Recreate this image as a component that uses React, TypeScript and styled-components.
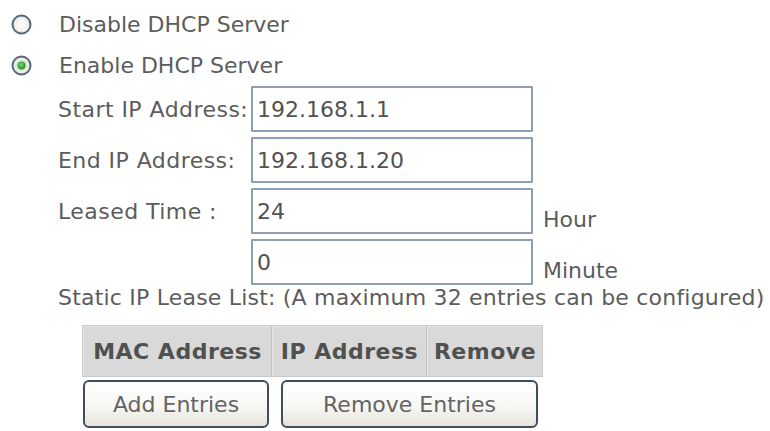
import React from "react";
import styled, { createGlobalStyle } from "styled-components";

const Global = createGlobalStyle`
  html, body { margin: 0; padding: 0; background: #ffffff; }
  body { font-family: "DejaVu Sans", Verdana, sans-serif; color: #5c5c5c; }
  * { box-sizing: border-box; }
`;

const Page = styled.div`
  width: 770px;
  height: 431px;
  padding: 4px 0 0 11px;
  font-size: 22px;
  overflow: hidden;
`;

const RadioRow = styled.label`
  display: flex;
  align-items: center;
  height: 41px;
  gap: 27px;
  color: #5c5c5c;
`;

const Radio = ({ checked }: { checked?: boolean }) => (
  <svg width="21" height="21" viewBox="0 0 21 21">
    <defs>
      <radialGradient id="rg" cx="50%" cy="50%" r="50%">
        <stop offset="0%" stopColor="#ffffff" />
        <stop offset="70%" stopColor="#f3f1ec" />
        <stop offset="100%" stopColor="#dedad0" />
      </radialGradient>
      <radialGradient id="dot" cx="45%" cy="40%" r="60%">
        <stop offset="0%" stopColor="#74d474" />
        <stop offset="100%" stopColor="#2b8a2b" />
      </radialGradient>
    </defs>
    <circle cx="10.5" cy="10.5" r="9" fill="url(#rg)" stroke="#56687c" strokeWidth="2" />
    {checked && <circle cx="10.5" cy="10.5" r="6" fill="#d2edd2" />}
    {checked && <circle cx="10.5" cy="10.5" r="4" fill="url(#dot)" />}
  </svg>
);

const FieldGrid = styled.div`
  display: grid;
  grid-template-columns: 193px 282px auto;
  grid-auto-rows: 46px;
  row-gap: 5px;
  margin-left: 47px;
`;

const FieldLabel = styled.div`
  display: flex;
  align-items: center;
  white-space: nowrap;
  letter-spacing: 0.45px;
`;

const TextInput = styled.div`
  border: 2px solid #8d9fb3;
  border-radius: 1px;
  background: #fff;
  display: flex;
  align-items: center;
  padding-left: 4px;
  color: #525252;
`;

const Unit = styled.div`
  display: flex;
  align-items: flex-end;
  padding: 0 0 2px 10px;
`;

const Note = styled.div`
  margin-left: 47px;
  line-height: 26px;
  white-space: nowrap;
  letter-spacing: 0.2px;
`;

const Table = styled.div`
  margin: 14px 0 0 71px;
  width: 461px;
  display: grid;
  grid-template-columns: 188px 154px 1fr;
  border: 1px solid #c8c8c8;
  background: #c2c2c2;
  gap: 1px;
`;

const HeadCell = styled.div`
  background: #d9d9d9;
  height: 50px;
  display: flex;
  align-items: center;
  justify-content: center;
  font-weight: bold;
  color: #505050;
  border-top: 1px solid #e6e6e6;
  border-left: 1px solid #e6e6e6;
  white-space: nowrap;
  letter-spacing: 0.5px;
`;

const ButtonRow = styled.div`
  display: flex;
  gap: 12px;
  margin: 3px 0 0 72px;
`;

const Button = styled.button<{ $w: number }>`
  width: ${(p) => p.$w}px;
  height: 48px;
  font-family: "DejaVu Sans", Verdana, sans-serif;
  font-size: 22px;
  color: #646464;
  border: 2px solid #3f4d5c;
  border-radius: 6px;
  background: linear-gradient(#ffffff 0%, #f7f7f4 55%, #e6e4dc 100%);
  padding: 0;
`;

export default function App() {
  return (
    <>
      <Global />
      <Page>
        <RadioRow>
          <Radio />
          <span>Disable DHCP Server</span>
        </RadioRow>
        <RadioRow>
          <Radio checked />
          <span>Enable DHCP Server</span>
        </RadioRow>
        <FieldGrid>
          <FieldLabel>Start IP Address:</FieldLabel>
          <TextInput>192.168.1.1</TextInput>
          <div />
          <FieldLabel>End IP Address:</FieldLabel>
          <TextInput>192.168.1.20</TextInput>
          <div />
          <FieldLabel>Leased Time :</FieldLabel>
          <TextInput>24</TextInput>
          <Unit>Hour</Unit>
          <div />
          <TextInput>0</TextInput>
          <Unit>Minute</Unit>
        </FieldGrid>
        <Note>Static IP Lease List: (A maximum 32 entries can be configured)</Note>
        <Table>
          <HeadCell>MAC Address</HeadCell>
          <HeadCell>IP Address</HeadCell>
          <HeadCell>Remove</HeadCell>
        </Table>
        <ButtonRow>
          <Button $w={186}>Add Entries</Button>
          <Button $w={257}>Remove Entries</Button>
        </ButtonRow>
      </Page>
    </>
  );
}
